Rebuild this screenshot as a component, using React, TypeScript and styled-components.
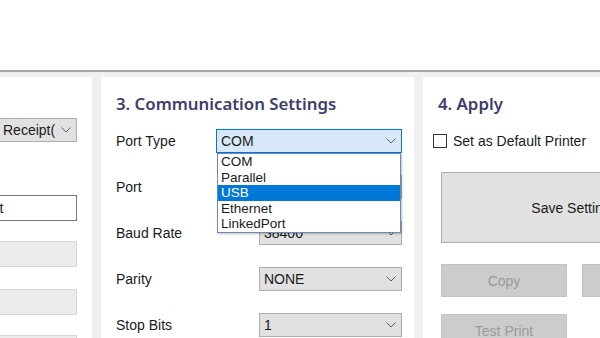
import React from 'react';
import styled, { createGlobalStyle } from 'styled-components';

const GlobalStyle = createGlobalStyle`
  html, body {
    margin: 0;
    padding: 0;
    background: #ffffff;
  }
  body {
    font-family: "Liberation Sans", Arial, sans-serif;
    font-size: 14px;
    color: #1a1a1a;
  }
`;

const Screen = styled.div`
  width: 600px;
  height: 338px;
  overflow: hidden;
  display: flex;
  flex-direction: column;
`;

const Header = styled.div`
  height: 70px;
  flex-shrink: 0;
  background: #ffffff;
  border-bottom: 2px solid #a4a4a4;
`;

const Body = styled.div`
  flex: 1;
  min-height: 0;
  display: flex;
  gap: 9px;
  padding-top: 5px;
  background: #f0f0f0;
  overflow: hidden;
`;

const SidePanel = styled.div`
  width: 92px;
  flex-shrink: 0;
  background: #ffffff;
  overflow: hidden;
  display: flex;
  flex-direction: column;
  align-items: flex-end;
  padding: 41px 15px 0 0;
  box-sizing: border-box;
`;

const Panel = styled.div<{ $width: number }>`
  width: ${p => p.$width}px;
  flex-shrink: 0;
  background: #ffffff;
  padding: 16px 12px 0 15px;
  box-sizing: border-box;
`;

const Title = styled.div`
  height: 22px;
  line-height: 22px;
  font-family: "Noto Sans", "Liberation Sans", sans-serif;
  font-size: 16.8px;
  font-weight: 600;
  color: #3d3d6b;
  white-space: nowrap;
  margin-bottom: 14px;
`;

const Rows = styled.div`
  display: flex;
  flex-direction: column;
  gap: 22px;
`;

const Row = styled.div`
  display: flex;
  align-items: center;
  height: 24px;
`;

const Label = styled.div`
  width: 100px;
  flex-shrink: 0;
  white-space: nowrap;
`;

const ComboWrap = styled.div<{ $indent?: number }>`
  position: relative;
  flex: 1;
  margin-left: ${p => p.$indent ?? 0}px;
`;

const Combo = styled.div<{ $focused?: boolean; $width?: number }>`
  height: 24px;
  width: ${p => (p.$width ? `${p.$width}px` : 'auto')};
  flex-shrink: 0;
  box-sizing: border-box;
  display: flex;
  align-items: center;
  justify-content: space-between;
  padding: 0 5px 0 4px;
  border: 1px solid ${p => (p.$focused ? '#0078d7' : '#adadad')};
  background: ${p => (p.$focused ? '#d8e8f8' : '#e1e1e1')};
  white-space: nowrap;
`;

const ComboText = styled.span<{ $clip?: number }>`
  overflow: hidden;
  max-width: ${p => (p.$clip ? `${p.$clip}px` : 'none')};
`;

const DropList = styled.ul`
  position: absolute;
  top: 100%;
  left: 1px;
  right: 1px;
  margin: 0;
  padding: 0;
  list-style: none;
  background: #ffffff;
  border: 1px solid #6c8ab0;
  box-shadow: 1px 1px 2px rgba(0, 0, 0, 0.25);
  z-index: 5;
`;

const DropItem = styled.li<{ $active?: boolean }>`
  height: 15.5px;
  line-height: 15.5px;
  padding-left: 3px;
  font-size: 13.5px;
  background: ${p => (p.$active ? '#0078d7' : 'transparent')};
  color: ${p => (p.$active ? '#ffffff' : '#1a1a1a')};
`;

const TextField = styled.div<{ $disabled?: boolean; $top: number }>`
  width: 126px;
  height: 26px;
  flex-shrink: 0;
  box-sizing: border-box;
  margin-top: ${p => p.$top}px;
  padding-left: 4px;
  line-height: 24px;
  border: 1px solid ${p => (p.$disabled ? '#d6d6d6' : '#7a7a7a')};
  background: ${p => (p.$disabled ? '#ececec' : '#ffffff')};
  white-space: nowrap;
`;

const ApplyPanel = styled(Panel)`
  padding-right: 0;
`;

const CheckRow = styled.label`
  display: flex;
  align-items: center;
  gap: 6px;
  height: 24px;
  margin-left: -5px;
  white-space: nowrap;
`;

const CheckBox = styled.span`
  width: 14px;
  height: 14px;
  box-sizing: border-box;
  border: 1px solid #333333;
  background: #ffffff;
`;

const BigButton = styled.div`
  width: 267px;
  height: 71px;
  margin: 19px 0 0 3px;
  box-sizing: border-box;
  border: 1px solid #adadad;
  background: #e1e1e1;
  display: flex;
  align-items: center;
  justify-content: center;
  white-space: nowrap;
`;

const ButtonRow = styled.div<{ $top: number }>`
  display: flex;
  gap: 15px;
  margin: ${p => p.$top}px 0 0 3px;
`;

const SmallButton = styled.div`
  width: 126px;
  height: 33px;
  flex-shrink: 0;
  box-sizing: border-box;
  border: 1px solid #c4c4c4;
  background: #cccccc;
  color: #9a9a9a;
  display: flex;
  align-items: center;
  justify-content: center;
  white-space: nowrap;
`;

const Chevron = () => (
  <svg width="10" height="6" viewBox="0 0 10 6">
    <polyline points="0.5,0.5 5,5 9.5,0.5" fill="none" stroke="#606060" strokeWidth="1" />
  </svg>
);

const portTypes = ['COM', 'Parallel', 'USB', 'Ethernet', 'LinkedPort'];

const settings = [
  { label: 'Port', value: 'COM1' },
  { label: 'Baud Rate', value: '38400' },
  { label: 'Parity', value: 'NONE' },
  { label: 'Stop Bits', value: '1' },
];

export default function App() {
  return (
    <>
      <GlobalStyle />
      <Screen>
        <Header />
        <Body>
          <SidePanel>
            <Combo $width={79}>
              <ComboText $clip={52}>Receipt(Thermal)</ComboText>
              <Chevron />
            </Combo>
            <TextField $top={53}>Receipt</TextField>
            <TextField $top={20} $disabled />
            <TextField $top={22} $disabled />
            <TextField $top={20} $disabled />
          </SidePanel>

          <Panel $width={313}>
            <Title>3. Communication Settings</Title>
            <Rows>
              <Row>
                <Label>Port Type</Label>
                <ComboWrap>
                  <Combo $focused>
                    <span>COM</span>
                    <Chevron />
                  </Combo>
                  <DropList>
                    {portTypes.map(t => (
                      <DropItem key={t} $active={t === 'USB'}>{t}</DropItem>
                    ))}
                  </DropList>
                </ComboWrap>
              </Row>
              {settings.map(s => (
                <Row key={s.label}>
                  <Label>{s.label}</Label>
                  <ComboWrap $indent={43}>
                    <Combo>
                      <span>{s.value}</span>
                      <Chevron />
                    </Combo>
                  </ComboWrap>
                </Row>
              ))}
            </Rows>
          </Panel>

          <ApplyPanel $width={300}>
            <Title>4. Apply</Title>
            <CheckRow>
              <CheckBox />
              Set as Default Printer
            </CheckRow>
            <BigButton>Save Settings</BigButton>
            <ButtonRow $top={21}>
              <SmallButton>Copy</SmallButton>
              <SmallButton>Delete</SmallButton>
            </ButtonRow>
            <ButtonRow $top={17}>
              <SmallButton>Test Print</SmallButton>
            </ButtonRow>
          </ApplyPanel>
        </Body>
      </Screen>
    </>
  );
}
